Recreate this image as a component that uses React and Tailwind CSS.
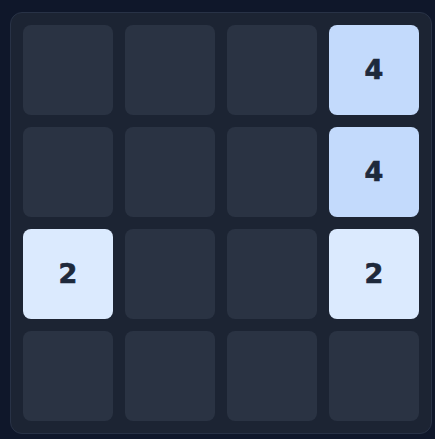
import React from 'react';

const grid = [
  [0, 0, 0, 4],
  [0, 0, 0, 4],
  [2, 0, 0, 2],
  [0, 0, 0, 0],
];

const tileStyles = {
  0: 'bg-[#2a3343]',
  2: 'bg-[#dbeafe] text-[#1e293b]',
  4: 'bg-[#c3dafc] text-[#1e293b]',
};

const Tile = ({ value }) => (
  <div
    className={`w-[90px] h-[90px] rounded-lg flex items-center justify-center text-[27px] font-bold [-webkit-text-stroke:0.7px] ${tileStyles[value]}`}
    style={{ fontFamily: '"DejaVu Sans", sans-serif' }}
  >
    {value ? value : ''}
  </div>
);

const App = () => {
  return (
    <div className="min-h-screen w-full bg-[#0f172a] pl-[10px] pt-[12px]">
      <div className="inline-grid grid-cols-4 gap-[12px] p-[12px] rounded-xl bg-[#1c2433] border border-[#283246]">
        {grid.flat().map((v, i) => (
          <Tile key={i} value={v} />
        ))}
      </div>
    </div>
  );
};

export default App;
